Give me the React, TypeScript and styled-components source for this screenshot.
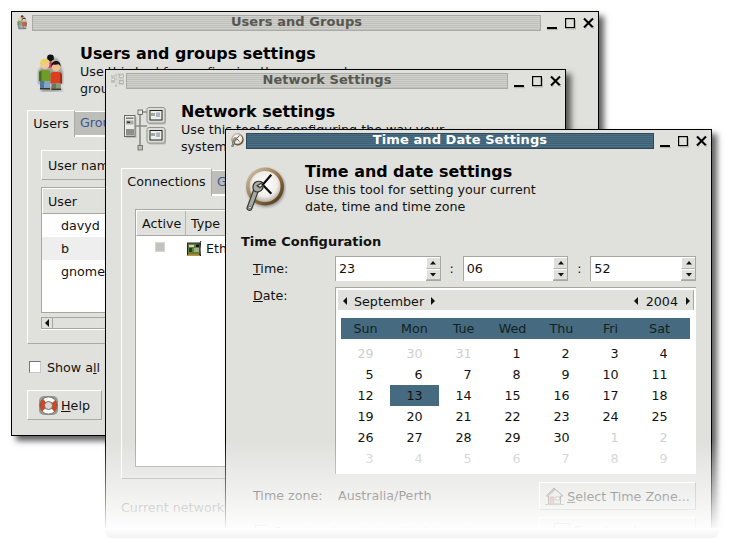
import React from 'react';
import styled, { createGlobalStyle } from 'styled-components';

const Global = createGlobalStyle`
  html, body { margin: 0; padding: 0; background: #fff; }
  body { font-family: "DejaVu Sans", sans-serif; font-size: 12.7px; color: #111; }
`;
const Page = styled.div`width: 731px; height: 547px; overflow: hidden;`;
const Stage = styled.div`position: relative; width: 731px; height: 528px; overflow: hidden;`;
const Fade = styled.div`
  position: absolute; left: 0; right: 0; bottom: 0; height: 88px; pointer-events: none;
  background: linear-gradient(to bottom, rgba(255,255,255,0), rgba(255,255,255,.62) 70%, rgba(255,255,255,.95));
`;
const Floor = styled.div`
  margin-left: 105px; width: 614px; height: 11px;
  background: linear-gradient(to bottom, #fff, #f3f3f3 85%, #fff);
  border-radius: 0 0 8px 8px;
`;
const Win = styled.div<{ $x: number; $y: number; $w: number; $h: number }>`
  position: absolute; left: ${p => p.$x}px; top: ${p => p.$y}px; width: ${p => p.$w}px; height: ${p => p.$h}px;
  box-sizing: border-box; background: #e0e1dd; border: 1px solid #000;
  box-shadow: 5px 5px 6px rgba(0,0,0,.62); display: flex; flex-direction: column; overflow: visible;
`;
const TitleBar = styled.div`display: flex; align-items: center; height: 19px; padding: 1px 4px 0 5px; flex: none;`;
const Mini = styled.div`width: 15px; height: 16px; flex: none; display: flex; align-items: center;`;
const Stripe = styled.div<{ $on?: boolean }>`
  flex: 1; height: 16px; box-sizing: border-box; display: flex; align-items: center; justify-content: center;
  padding: 0 0 2px 20px;
  border: 1px solid ${p => p.$on ? '#2f4858' : '#a9aaa5'}; font-weight: bold; font-size: 13px; line-height: 14px;
  letter-spacing: .08px; color: ${p => p.$on ? '#fff' : '#565750'};
  background: repeating-linear-gradient(to bottom, ${p => p.$on ? '#4b7086 0, #4b7086 1px, #3f6075 1px, #3f6075 2px' : '#d0d1cc 0, #d0d1cc 1px, #bfc0bb 1px, #bfc0bb 2px'});
`;
const Controls = styled.div`display: flex; width: 53px; flex: none; justify-content: flex-end; height: 16px;`;
const Body = styled.div`padding: 0 15px; display: flex; flex-direction: column; flex: 1; min-height: 0;`;
const Header = styled.div<{ $icon: number; $gap: number; $top: number }>`
  display: flex; margin-top: 13px; margin-bottom: 13px; padding-left: ${p => p.$icon}px; height: 52px; flex: none;
  & > svg { flex: none; margin-right: ${p => p.$gap}px; margin-top: ${p => p.$top}px; }
`;
const HeadText = styled.div`display: flex; flex-direction: column;`;
const H1 = styled.div`font-weight: bold; font-size: 15.9px; line-height: 18px; white-space: nowrap; color: #000;`;
const Desc = styled.div`line-height: 17px; white-space: nowrap; color: #111;`;
const Tabs = styled.div`display: flex; align-items: flex-end; flex: none;`;
const Tab = styled.div<{ $on?: boolean; $w: number; $h: number }>`
  width: ${p => p.$w}px; height: ${p => p.$h}px; box-sizing: border-box; display: flex; align-items: center;
  white-space: nowrap; overflow: hidden; padding-bottom: 2px;
  ${p => p.$on ? 'justify-content:center;background:#e0e1dd;border-top:1px solid #fff;border-left:1px solid #fff;border-right:1px solid #a9aaa5;color:#111;margin-bottom:-1px;position:relative;'
    : 'padding-left:5px;background:#bdbeb9;border-top:1px solid #fff;border-bottom:1px solid #fff;color:#3a5795;'}
`;
const Panel = styled.div<{ $h: number }>`
  height: ${p => p.$h}px; box-sizing: border-box; flex: none; padding: 13px 13px;
  border-top: 1px solid #fff; border-left: 1px solid #fff; border-right: 1px solid #a9aaa5; border-bottom: 1px solid #a9aaa5;
  display: flex; flex-direction: column;
`;
const NameBox = styled.div`
  height: 30px; box-sizing: border-box; flex: none; display: flex; align-items: center; padding-left: 6px; margin-bottom: 7px;
  border-top: 1px solid #fff; border-left: 1px solid #fff; border-bottom: 1px solid #a9aaa5; border-right: 1px solid #a9aaa5;
`;
const ListBox = styled.div<{ $h: number }>`
  height: ${p => p.$h}px; box-sizing: border-box; flex: none; background: #fff; border: 1px solid #a6a7a1; border-right: 0;
`;
const ColHeads = styled.div`
  display: flex; height: 26px; background: #e0e1dd; border-top: 1px solid #fff; border-left: 1px solid #fff; border-bottom: 1px solid #a6a7a1; box-sizing: border-box;
`;
const ColHead = styled.div<{ $w: number }>`
  width: ${p => p.$w}px; flex: none; padding-left: 5px; box-sizing: border-box; display: flex; align-items: center;
  border-right: 1px solid #b6b7b2; white-space: nowrap;
`;
const UserRow = styled.div<{ $alt?: boolean }>`height: 23px; padding-left: 19px; display: flex; align-items: center; background: ${p => p.$alt ? '#eeeeee' : '#fff'};`;
const HScroll = styled.div`
  margin-top: 4px; height: 13px; flex: none; display: flex; box-sizing: border-box; background: #c9cac5;
  border-bottom: 1px solid #fff;
`;
const ScrollBtn = styled.div`width: 12px; background: #e0e1dd; border: 1px solid #a6a7a1; box-sizing: border-box; display: flex; align-items: center; justify-content: center;`;
const Thumb = styled.div`flex: 1; background: #e0e1dd; border: 1px solid #a6a7a1; border-left: 0; box-sizing: border-box;`;
const Check = styled.div`
  width: 12px; height: 12px; box-sizing: border-box; flex: none; background: #fff;
  border: 1px solid #77786f; border-bottom-color: #c8c9c4; border-right-color: #c8c9c4;
`;
const CheckRow = styled.div`display: flex; align-items: center; gap: 6px; white-space: nowrap; margin: 17px 0 0 2px; height: 12px;`;
const Btn = styled.div<{ $w: number; $h: number }>`
  width: ${p => p.$w}px; height: ${p => p.$h}px; box-sizing: border-box; display: flex; align-items: center; justify-content: center; gap: 3px;
  border-top: 1px solid #fff; border-left: 1px solid #fff; border-right: 1px solid #a9aaa5; border-bottom: 1px solid #a9aaa5; flex: none; white-space: nowrap;
`;
const HelpSlot = styled.div`margin-top: 17px;`;
const U = styled.span`text-decoration: underline;`;
const ActiveBox = styled.div`width: 10px; height: 10px; background: #c2c3be; border: 1px solid #d6d7d2; box-sizing: border-box; margin: 4px 0 0 19px;`;
const NetRow = styled.div`display: flex; height: 23px;`;
const NetCell = styled.div<{ $w: number }>`
  width: ${p => p.$w}px; flex: none; display: flex; gap: 4px; padding-top: 2px; box-sizing: border-box; white-space: nowrap; line-height: 21px;
  & > svg { flex: none; margin: 2px 0 0 2px; }
`;
const Muted = styled.div`margin-top: 21px; color: #777; white-space: nowrap;`;
const Section = styled.div`font-weight: bold; font-size: 13px; line-height: 16px; margin: 6px 0 6px; color: #111;`;
const Grid = styled.div`display: grid; grid-template-columns: 94px 361px; row-gap: 6px; margin-bottom: 6px;`;
const FieldLabel = styled.div<{ $tall?: boolean }>`padding-left: 12px; line-height: ${p => p.$tall ? 17 : 25}px; height: 25px;`;
const SpinLine = styled.div`display: flex; height: 25px;`;
const Spin = styled.div`flex: 1; display: flex; min-width: 0;`;
const SpinEntry = styled.div`
  flex: 1; background: #fff; border-top: 1px solid #a6a7a1; border-left: 1px solid #a6a7a1; box-sizing: border-box; padding-left: 3px; line-height: 23px;
`;
const Steppers = styled.div`width: 15px; flex: none; display: flex; flex-direction: column; border: 1px solid #a6a7a1; border-left: 0; box-sizing: border-box;`;
const Step = styled.div`flex: 1; display: flex; align-items: center; justify-content: center; border-left: 1px solid #fff; border-top: 1px solid #fff; border-bottom: 1px solid #b3b4af;`;
const Colon = styled.div`width: 22px; text-align: center; line-height: 25px; flex: none;`;
const Cal = styled.div`
  width: 361px; height: 187px; box-sizing: border-box; background: #fff; border-top: 1px solid #a6a7a1; border-left: 1px solid #a6a7a1; padding: 2px 2px 0 2px;
`;
const CalBar = styled.div`display: flex; justify-content: space-between; align-items: center; height: 20px; background: #e0e1dd; border-right: 1px solid #a6a7a1; padding: 2px 2px 0 4px; box-sizing: border-box;`;
const CalNav = styled.div<{ $gap: number }>`display: flex; align-items: center; gap: ${p => p.$gap}px;`;
const Weeks = styled.div`display: grid; grid-template-columns: repeat(7, 49px); width: 349px; margin: 8px 0 4px 3px; height: 21px; background: #466a7f; align-items: center;`;
const WeekDay = styled.div`text-align: center; color: #122; line-height: 21px;`;
const Days = styled.div`display: grid; grid-template-columns: repeat(7, 49px); margin-left: 3px; grid-auto-rows: 21px;`;
const Day = styled.div<{ $off?: boolean; $sel?: boolean }>`
  display: flex; justify-content: center; align-items: center; color: ${p => p.$off ? '#cfcfcf' : '#111'};
  background: ${p => p.$sel ? '#466a7f' : 'transparent'};
`;
const DayNum = styled.span`display: inline-block; width: 16px; text-align: right;`;
const ZoneRow = styled.div`display: flex; align-items: flex-start; color: #333; margin-top: 2px;`;
const ZoneLabel = styled.div`width: 85px; padding-left: 12px; flex: none; line-height: 27px;`;
const ZoneValue = styled.div`flex: 1; line-height: 27px;`;
const SyncRow = styled.div`display: flex; align-items: flex-start; gap: 7px; margin: 7px 0 0 14px; color: #555; white-space: nowrap;`;
const SyncCheck = styled.div`display: flex; align-items: center; gap: 7px; margin-top: 8px; height: 12px;`;
const GhostBtn = styled.div`
  margin-left: auto; width: 157px; height: 28px; box-sizing: border-box; border-top: 1px solid #fff; border-left: 1px solid #fff; border-right: 1px solid #a9aaa5;
  display: flex; justify-content: center; gap: 4px; padding-top: 5px;
`;

const WinButtons = () => (
  <svg width="53" height="16" viewBox="0 0 53 16" style={{ display: 'block' }}>
    <rect x="6" y="12" width="10" height="2.200" fill="#000" />
    <rect x="7" y="14.200" width="10" height="1" fill="#b5b5b1" />
    <rect x="24.600" y="3.600" width="8.800" height="9" fill="none" stroke="#000" strokeWidth="1.200" />
    <path d="M34.500 5v9M26 14h9" stroke="#b5b5b1" strokeWidth="1" />
    <path d="M43 3.500l9 9M52 3.500l-9 9" stroke="#000" strokeWidth="2.100" />
    <path d="M44 14l1.600-1.400M53 14l-1.600-1.600" stroke="#b5b5b1" strokeWidth="1" />
  </svg>
);
const Arrow = ({ d, c = '#111' }: { d: 'l' | 'r' | 'u' | 'd'; c?: string }) => {
  const p = { l: 'M5 0v8L1 4z', r: 'M1 0v8l4-4z', u: 'M3 1L0 4.500h6z', d: 'M3 4.500L0 1h6z' }[d];
  const v = d === 'u' || d === 'd';
  return <svg width={6} height={v ? 5 : 8} style={{ display: 'block', flex: 'none' }}><path d={p} fill={c} /></svg>;
};

const UsersIcon = ({ s = 1, g = false }: { s?: number; g?: boolean }) => (
  <svg width={27 * s} height={38 * s} viewBox="0 0 27 38" style={g ? { filter: 'saturate(.7) opacity(.8)' } : undefined}>
    <defs><filter id="us" x="-30%" y="-30%" width="160%" height="160%"><feGaussianBlur stdDeviation="1" /></filter></defs>
    <path d="M3 36l9-4 12 2 2 3-10 1H5zM1 17L13 2l8 3 5 13v12H1z" fill="#000" opacity=".28" filter="url(#us)" />
    <circle cx="13.500" cy="4" r="3.400" fill="#111" />
    <path d="M11 8h7.500l1 5-8 1z" fill="#c8357c" />
    <circle cx="16.500" cy="8" r="2" fill="#e9a98a" />
    <path d="M2 19q0-3 3-3h6q2.500 0 2.500 3v8H2z" fill="#6f9e28" />
    <path d="M2 19v8h2.500v-10q-2.500 0-2.500 2z" fill="#46701a" />
    <path d="M3 27h4.500v7H3z" fill="#4f78a0" /><path d="M7.500 27H13v7H7.500z" fill="#7ea6c6" />
    <path d="M3 34h10v1.500H3z" fill="#333" />
    <circle cx="8" cy="10.500" r="4.500" fill="#f2c892" />
    <path d="M3.200 11C2.500 7 5 4.800 8 4.800c3 0 5 1.700 4.700 4.300-2.500-.1-4.600-.4-6-.9-.4 1.200-1.800 2-3.500 2.800z" fill="#e8d25e" />
    <path d="M13.500 21q0-3 3-3h5.500q3 0 3 3v8.500H13.500z" fill="#d8401f" />
    <path d="M23 19q2 .4 2 3v7.500h-2z" fill="#a62b12" />
    <path d="M14.500 29.500H19v5h-4.500z" fill="#6a7758" /><path d="M19 29.500h5v5h-5z" fill="#8a9a78" />
    <path d="M14.500 34.500h9.500v1.500h-9.500z" fill="#333" />
    <circle cx="19" cy="13" r="4.400" fill="#f2c08c" />
    <path d="M14.400 13c-.7-3.800 1.800-6 4.600-6 3 0 5 2.100 4.500 5.500l-1.600-2.200c-2 .6-4.800.5-5.900.2z" fill="#151515" />
  </svg>
);
const NetIcon = ({ s = 1, g = false }: { s?: number; g?: boolean }) => (
  <svg width={42 * s} height={44 * s} viewBox="0 0 42 44" style={g ? { opacity: .55 } : undefined}>
    <rect x="1.500" y="10" width="11" height="21" fill="#000" opacity=".15" />
    <rect x="0.500" y="8.500" width="10.500" height="21" fill="#ecece8" stroke="#6a6b64" />
    <rect x="2" y="10.500" width="7.500" height="1.500" fill="#77786f" /><rect x="2" y="13.500" width="7.500" height="4" fill="#a9aaa3" />
    <rect x="3" y="14.500" width="3" height="1.500" fill="#333" />
    <path d="M3 22v6.500M5 22v6.500M7 22v6.500M9 22v6.500" stroke="#33342f" strokeWidth="1" />
    <path d="M11 19h5M16 5v36M16 5h7M16 19h7M16 41h-1" stroke="#8b8c85" strokeWidth="1.600" fill="none" />
    <rect x="14" y="3" width="4.500" height="4.500" fill="#e6e7e3" stroke="#55564f" strokeWidth=".8" />
    <rect x="14" y="38.500" width="4.500" height="4.500" fill="#bfc0bb" stroke="#66675f" strokeWidth=".8" />
    {[0, 20].map(y => (
      <g key={y} transform={`translate(0 ${y})`}>
        <rect x="24" y="1.500" width="18" height="16" rx="2" fill="#000" opacity=".18" />
        <rect x="23" y="0.500" width="18" height="15.500" rx="2" fill="#dcddd8" stroke="#93948d" />
        <rect x="25.500" y="3" width="13" height="10.500" fill="#23241f" />
        <rect x="26.500" y="4" width="11" height="8.500" fill="#eeefea" />
        <rect x="27" y="6" width="4" height="3" fill="#a5a69f" /><rect x="32" y="5.500" width="4" height="4.500" fill="#a9b4c6" />
      </g>
    ))}
  </svg>
);
const ClockIcon = ({ s = 1 }: { s?: number }) => (
  <svg width={41 * s} height={46 * s} viewBox="0 0 41 46">
    <defs>
      <radialGradient id="face" cx=".5" cy=".42" r=".62"><stop offset="0" stopColor="#ffffff" /><stop offset=".65" stopColor="#eeede8" /><stop offset="1" stopColor="#a8a294" /></radialGradient>
      <linearGradient id="rim" x1="0" y1="0" x2=".9" y2="1"><stop offset="0" stopColor="#d7d0bf" /><stop offset=".5" stopColor="#9a794c" /><stop offset="1" stopColor="#4e3415" /></linearGradient>
      <filter id="cs" x="-20%" y="-20%" width="140%" height="140%"><feGaussianBlur stdDeviation="1.500" /></filter>
    </defs>
    <circle cx="21" cy="21" r="19" fill="#000" opacity=".35" filter="url(#cs)" />
    <circle cx="20" cy="19.500" r="19" fill="url(#rim)" />
    <circle cx="20" cy="19.500" r="15.500" fill="url(#face)" />
    <path d="M26.300 7.700L17.700 17.700 26.300 26.700" fill="none" stroke="#0c0c0c" strokeWidth="2.200" />
    <path d="M11.500 22L4.500 41" stroke="#3a3b36" strokeWidth="6" strokeLinecap="round" />
    <path d="M11.500 22L4.500 41" stroke="#a9aaa4" strokeWidth="3.600" strokeLinecap="round" />
    <path d="M17.500 15.500c-2.200-1.800-6-1.700-8 .5-2 2.200-2 5.600-.5 7.600 2 1.800 5.200 1.600 7.200-.2 1.800-1.800 2.400-3.600 2-5.200l-3.400 2.300-2.600-1.800z" fill="#a9aaa4" stroke="#2e2f2a" strokeWidth="1.200" />
    <circle cx="4.800" cy="40.500" r="1.300" fill="#f0f0ec" stroke="#33342f" strokeWidth=".6" />
  </svg>
);
const HelpIcon = () => (
  <svg width="19" height="19" viewBox="0 0 19 19" style={{ flex: 'none' }}>
    <rect x="0" y="0" width="19" height="19" rx="5" fill="#66675f" opacity=".6" />
    <circle cx="9.500" cy="9.500" r="6.300" fill="none" stroke="#fff" strokeWidth="4.600" />
    <circle cx="9.500" cy="9.500" r="6.300" fill="none" stroke="#d9431e" strokeWidth="4.600" strokeDasharray="9.900 9.900" strokeDashoffset="5" />
    <circle cx="9.500" cy="9.500" r="8.600" fill="none" stroke="#55564f" strokeWidth=".7" />
    <circle cx="9.500" cy="9.500" r="4" fill="#d6d7d2" stroke="#4a4b45" strokeWidth=".7" />
  </svg>
);
const HouseIcon = () => (
  <svg width="19" height="19" viewBox="0 0 19 19" style={{ flex: 'none' }}>
    <path d="M9 1L1 9h2.500v8h12V9H18z" fill="#dedfda" stroke="#6d6e67" />
    <path d="M9 1L1 9h3l7-6.500z" fill="#a49e92" />
    <rect x="5" y="10" width="4" height="7" fill="#d99a94" stroke="#7a5a55" strokeWidth=".5" />
    <rect x="11" y="10" width="3.500" height="3" fill="#fff" stroke="#6d6e67" strokeWidth=".7" />
    <path d="M0 17.500h19" stroke="#8a8b84" />
  </svg>
);
const EthIcon = () => (
  <svg width="15" height="17" viewBox="0 0 15 17">
    <path d="M14 1c-1.500 2 0 4-1 6s0 6 .5 9" fill="none" stroke="#111" />
    <rect x="0.500" y="3" width="12.500" height="12" fill="#5f7f42" stroke="#222" />
    <rect x="2" y="5" width="5" height="2" fill="#cfd7a8" /><rect x="2" y="8" width="3" height="4" fill="#2b3b20" />
    <path d="M7 9h5M7 11h5" stroke="#dfe6bd" /><rect x="9" y="4.500" width="3" height="2.500" fill="#111" />
    <path d="M1 15h11" stroke="#c89a2a" strokeWidth="1.500" />
  </svg>
);
const DocIcon = () => (
  <svg width="16" height="20" viewBox="0 0 16 20" style={{ flex: 'none' }}><rect x=".5" y=".5" width="15" height="19" fill="#eee" stroke="#888" /></svg>
);

const weekNames = ['Sun', 'Mon', 'Tue', 'Wed', 'Thu', 'Fri', 'Sat'];
const dayList: { n: number; off?: boolean }[] = [
  { n: 29, off: true }, { n: 30, off: true }, { n: 31, off: true },
  ...Array.from({ length: 30 }, (_, i) => ({ n: i + 1 })),
  ...Array.from({ length: 9 }, (_, i) => ({ n: i + 1, off: true })),
];
const SpinBox = ({ v }: { v: string }) => (
  <Spin>
    <SpinEntry>{v}</SpinEntry>
    <Steppers>
      <Step><Arrow d="u" /></Step>
      <Step><Arrow d="d" /></Step>
    </Steppers>
  </Spin>
);

export default function App() {
  return (
    <Page>
      <Global />
      <Stage>
        <Win $x={11} $y={11} $w={588} $h={425}>
          <TitleBar>
            <Mini><UsersIcon s={0.38} g /></Mini>
            <Stripe>Users and Groups</Stripe>
            <Controls><WinButtons /></Controls>
          </TitleBar>
          <Body>
            <Header $icon={10} $gap={16} $top={9}>
              <UsersIcon />
              <HeadText>
                <H1>Users and groups settings</H1>
                <Desc>Use this tool for configuring the users and</Desc>
                <Desc>groups on your system</Desc>
              </HeadText>
            </Header>
            <Tabs>
              <Tab $on $w={48} $h={27}>Users</Tab>
              <Tab $w={90} $h={25}>Groups</Tab>
            </Tabs>
            <Panel $h={208}>
              <NameBox>User name:</NameBox>
              <ListBox $h={126}>
                <ColHeads><ColHead $w={200}>User</ColHead></ColHeads>
                <UserRow>davyd</UserRow>
                <UserRow $alt>b</UserRow>
                <UserRow>gnome</UserRow>
              </ListBox>
              <HScroll><ScrollBtn><Arrow d="l" /></ScrollBtn><Thumb /></HScroll>
            </Panel>
            <CheckRow><Check /><span>Show a<U>l</U>l users</span></CheckRow>
            <HelpSlot>
              <Btn $w={75} $h={30}><HelpIcon /><span><U>H</U>elp</span></Btn>
            </HelpSlot>
          </Body>
        </Win>

        <Win $x={105} $y={69} $w={461} $h={470}>
          <TitleBar>
            <Mini><NetIcon s={0.32} g /></Mini>
            <Stripe>Network Settings</Stripe>
            <Controls><WinButtons /></Controls>
          </TitleBar>
          <Body>
            <Header $icon={3} $gap={15} $top={4}>
              <NetIcon />
              <HeadText>
                <H1>Network settings</H1>
                <Desc>Use this tool for configuring the way your</Desc>
                <Desc>system connects to the network</Desc>
              </HeadText>
            </Header>
            <Tabs>
              <Tab $on $w={91} $h={28}>Connections</Tab>
              <Tab $w={90} $h={25}>General</Tab>
            </Tabs>
            <Panel $h={284}>
              <ListBox $h={258}>
                <ColHeads>
                  <ColHead $w={49}>Active</ColHead>
                  <ColHead $w={60}>Type</ColHead>
                </ColHeads>
                <NetRow>
                  <NetCell $w={49}><ActiveBox /></NetCell>
                  <NetCell $w={60}><EthIcon />Ethernet</NetCell>
                </NetRow>
              </ListBox>
            </Panel>
            <Muted>Current network location:</Muted>
          </Body>
        </Win>

        <Win $x={225} $y={129} $w={487} $h={420}>
          <TitleBar>
            <Mini><ClockIcon s={0.32} /></Mini>
            <Stripe $on>Time and Date Settings</Stripe>
            <Controls><WinButtons /></Controls>
          </TitleBar>
          <Body>
            <Header $icon={4} $gap={19} $top={4}>
              <ClockIcon />
              <HeadText>
                <H1>Time and date settings</H1>
                <Desc>Use this tool for setting your current</Desc>
                <Desc>date, time and time zone</Desc>
              </HeadText>
            </Header>
            <Section>Time Configuration</Section>
            <Grid>
              <FieldLabel><U>T</U>ime:</FieldLabel>
              <SpinLine>
                <SpinBox v="23" /><Colon>:</Colon><SpinBox v="06" /><Colon>:</Colon><SpinBox v="52" />
              </SpinLine>
              <FieldLabel $tall><U>D</U>ate:</FieldLabel>
              <Cal>
                <CalBar>
                  <CalNav $gap={6}><Arrow d="l" />September<Arrow d="r" /></CalNav>
                  <CalNav $gap={7}><Arrow d="l" />2004<Arrow d="r" /></CalNav>
                </CalBar>
                <Weeks>{weekNames.map(w => <WeekDay key={w}>{w}</WeekDay>)}</Weeks>
                <Days>
                  {dayList.map((d, i) => (
                    <Day key={i} $off={d.off} $sel={!d.off && d.n === 13}><DayNum>{d.n}</DayNum></Day>
                  ))}
                </Days>
              </Cal>
            </Grid>
            <ZoneRow>
              <ZoneLabel>Time zone:</ZoneLabel>
              <ZoneValue>Australia/Perth</ZoneValue>
              <Btn $w={157} $h={28}><HouseIcon /><span><U>S</U>elect Time Zone...</span></Btn>
            </ZoneRow>
            <SyncRow>
              <SyncCheck><Check />Synchronize clock with internet servers</SyncCheck>
              <GhostBtn><DocIcon />Synchronize now</GhostBtn>
            </SyncRow>
          </Body>
        </Win>
        <Fade />
      </Stage>
      <Floor />
    </Page>
  );
}
